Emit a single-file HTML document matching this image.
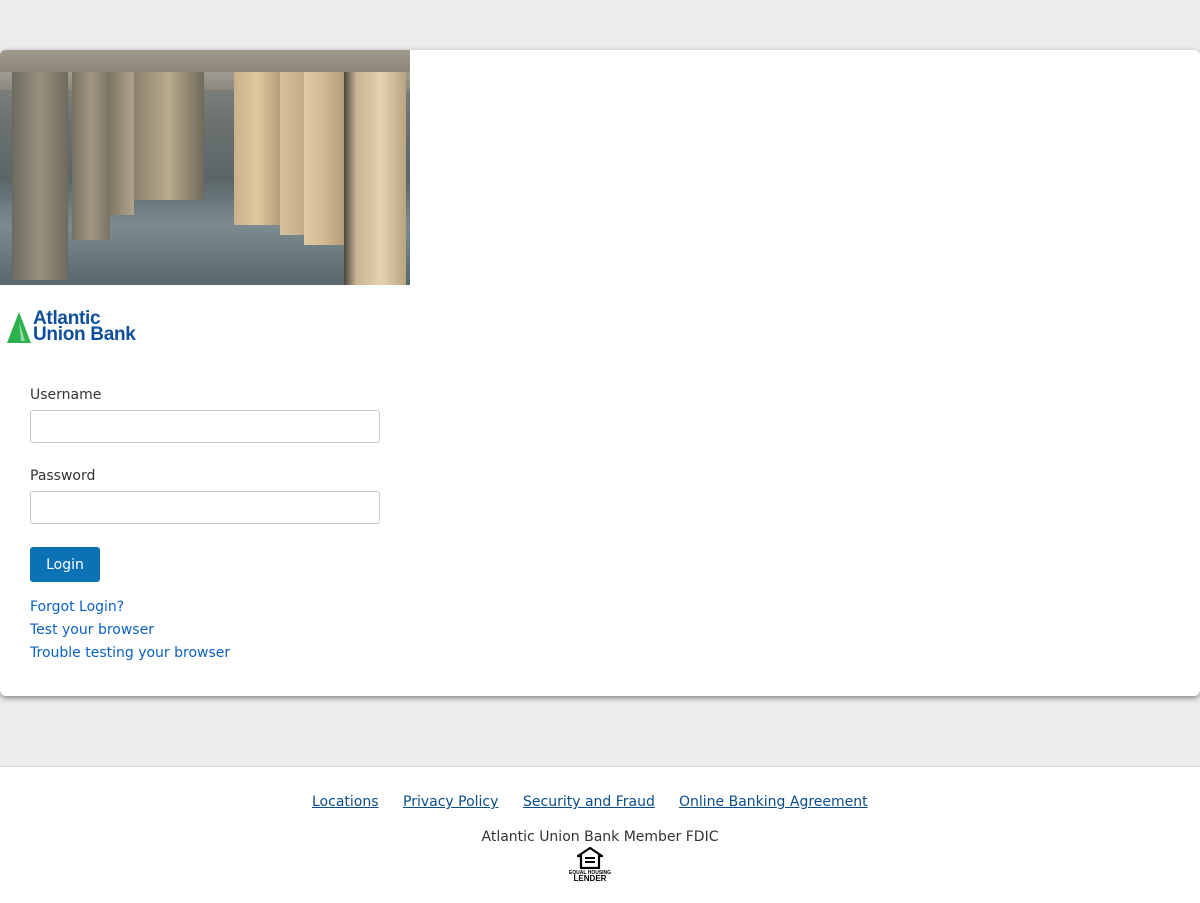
<!DOCTYPE html>
<html><head><style>
body{margin:0;background:#ececec;font-family:"DejaVu Sans",sans-serif;width:1200px;height:902px;overflow:hidden;position:relative}
.card{position:absolute;left:0;top:50px;width:1200px;height:646px;background:#fff;border-radius:6px;box-shadow:0 2px 6px rgba(0,0,0,.45);overflow:hidden}
.img{position:absolute;left:0;top:0;width:410px;height:235px;background:linear-gradient(180deg,#8a8e8a 0%,#6d7270 30%,#5a6668 55%,#7d8b90 75%,#55666c 100%)}
.col{position:absolute;top:0}
.lbl{position:absolute;left:30px;font-size:14px;color:#333}
.inp{position:absolute;left:30px;width:348px;height:31px;border:1px solid #c8c8c8;border-radius:3px;background:#fff}
.btn{position:absolute;left:30px;top:497px;width:70px;height:35px;background:#0a72b5;color:#fff;font-size:14px;border-radius:3px;text-align:center;line-height:36px}
.lnk{position:absolute;left:30px;font-size:14px;color:#0b60c4}
.foot{position:absolute;left:0;top:766px;width:1200px;height:136px;background:#fff;border-top:1px solid #d8d8d8}
.fl{position:absolute;top:27px;font-size:14px;color:#0a4d8c;text-decoration:underline}
</style></head><body>
<div class="card">
 <div class="img">
  <div style="position:absolute;left:0;top:0;width:410px;height:40px;background:linear-gradient(180deg,#b9b4aa,#8c887d)"></div>
  <div class="col" style="left:12px;width:56px;height:230px;background:linear-gradient(90deg,#6c6a60,#9a917f,#6f6a5e)"></div>
  <div class="col" style="left:72px;width:38px;height:190px;background:linear-gradient(90deg,#75705f,#a09682,#7a7262)"></div>
  <div class="col" style="left:110px;width:24px;height:165px;background:linear-gradient(90deg,#807866,#b0a48c)"></div>
  <div class="col" style="left:134px;width:70px;height:150px;background:linear-gradient(90deg,#8c826c,#b8aa8c,#6f6a5c)"></div>
  <div class="col" style="left:234px;width:46px;height:175px;background:linear-gradient(90deg,#c8b18c,#e0c9a0,#b69e7a)"></div>
  <div class="col" style="left:280px;width:24px;height:185px;background:linear-gradient(90deg,#d8c39c,#c2ab85)"></div>
  <div class="col" style="left:304px;width:40px;height:195px;background:linear-gradient(90deg,#e0cba4,#d2b993,#b49c78)"></div>
  <div class="col" style="left:344px;width:62px;height:235px;background:linear-gradient(90deg,#4a463e,#c9b493 20%,#e4d1ad 60%,#b9a482)"></div>
  <div style="position:absolute;left:0;top:0;width:410px;height:22px;background:linear-gradient(180deg,#a09a8c,#8c877a)"></div>
 </div>
 <svg style="position:absolute;left:7px;top:262px" width="24" height="31" viewBox="0 0 24 31"><path d="M12 0L24 31H0Z" fill="#2bb24c"/><path d="M12 9L18 29H14Z" fill="#fff" opacity=".5"/></svg>
 <div style="position:absolute;left:33px;top:261px;font-family:'Liberation Sans',sans-serif;font-weight:bold;color:#0d4f9c;font-size:19px;line-height:15.5px;letter-spacing:-0.3px">Atlantic<br>Union Bank</div>
 <div class="lbl" style="top:337px">Username</div>
 <div class="inp" style="top:360px"></div>
 <div class="lbl" style="top:418px">Password</div>
 <div class="inp" style="top:441px"></div>
 <div class="btn">Login</div>
 <div class="lnk" style="top:549px">Forgot Login?</div>
 <div class="lnk" style="top:572px">Test your browser</div>
 <div class="lnk" style="top:595px">Trouble testing your browser</div>
</div>
<div class="foot">
 <span class="fl" style="left:312px">Locations</span>
 <span class="fl" style="left:403px">Privacy Policy</span>
 <span class="fl" style="left:523px">Security and Fraud</span>
 <span class="fl" style="left:679px">Online Banking Agreement</span>
 <div style="position:absolute;top:62px;width:1200px;text-align:center;font-size:14px;color:#333">Atlantic Union Bank Member FDIC</div>
 <svg style="position:absolute;left:577px;top:80px" width="26" height="22" viewBox="0 0 26 22"><path d="M13 1L1 9h3v12h18V9h3Z" fill="none" stroke="#000" stroke-width="2.2"/><rect x="8" y="10" width="10" height="2" fill="#000"/><rect x="8" y="14" width="10" height="2" fill="#000"/></svg>
 <div style="position:absolute;left:566px;top:103px;width:48px;text-align:center;font-family:'Liberation Sans',sans-serif;font-weight:bold;font-size:5px;line-height:6px">EQUAL HOUSING<br><span style="font-size:8px">LENDER</span></div>
</div>
</body></html>
